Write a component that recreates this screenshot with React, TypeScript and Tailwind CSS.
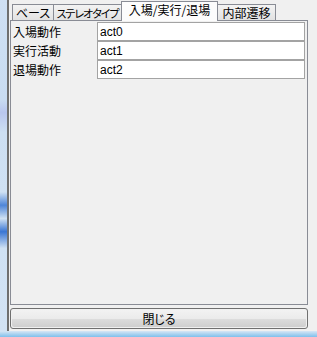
import React from "react";

const tabs = [
  { label: "ベース", w: "w-[42px]", fit: "", active: false },
  { label: "ステレオタイプ", w: "w-[69px]", fit: "text-[11px] tracking-[-1px]", active: false },
  { label: "入場/実行/退場", w: "w-[97px]", fit: "", active: true },
  { label: "内部遷移", w: "w-[59px]", fit: "", active: false },
];

const rows = [
  { label: "入場動作", value: "act0" },
  { label: "実行活動", value: "act1" },
  { label: "退場動作", value: "act2" },
];

export default function App() {
  return (
    <div className="w-[317px] h-[337px] bg-[#f0f0f0] flex flex-col overflow-hidden text-[12px] leading-none text-black font-['Noto_Sans_CJK_JP','Noto_Sans',sans-serif] [font-feature-settings:'palt']">
      <div className="flex flex-1 min-h-0">
        {/* window frame, left */}
        <div className="w-[7px] bg-[linear-gradient(to_bottom,#cfe0f3_0%,#c9dcf1_30%,#b9c6ee_34%,#cddff2_40%,#cfe1f3_58%,#4f86d8_62%,#cfe1f3_66%,#3a76d4_70%,#cfe1f3_75%,#d3e3f4_100%)]" />
        <div className="w-[2px] bg-[#6f6f6f]" />

        <div className="flex-1 flex flex-col pl-[1px] pr-[9px]">
          {/* tab strip */}
          <div className="h-[20px] flex items-end pl-[2px] relative z-10">
            {tabs.map((t) =>
              t.active ? (
                <div
                  key={t.label}
                  className={`${t.w} shrink-0 h-[20px] -mb-px -mr-px bg-[#fcfcfc] border border-b-0 border-[#898c95] flex items-center justify-center pb-[3px] whitespace-nowrap`}
                >
                  {t.label}
                </div>
              ) : (
                <div
                  key={t.label}
                  className={`${t.w} ${t.fit} shrink-0 h-[16px] -mr-px overflow-hidden bg-[linear-gradient(to_bottom,#f3f3f3,#e2e2e2)] border border-b-0 border-[#898c95] flex items-center justify-center pt-[1px] whitespace-nowrap`}
                >
                  {t.label}
                </div>
              )
            )}
          </div>

          {/* tab page */}
          <div className="flex-1 border border-[#898c95] bg-[#f0f0f0] pt-[1px] pl-[1px] pr-[2px]">
            {rows.map((r) => (
              <div key={r.label} className="flex h-[19px] items-center">
                <div className="w-[85px] pl-[1px] whitespace-nowrap">{r.label}</div>
                <div className="flex-1 h-[19px] bg-white border border-[#a3a3a3] flex items-center pl-[2px] font-['Liberation_Sans',sans-serif] text-[12px]">
                  {r.value}
                </div>
              </div>
            ))}
          </div>

          {/* close button */}
          <div className="mt-[3px] mb-[2px] h-[21px] rounded-[3px] border border-[#707070] p-px">
            <div className="h-full rounded-[2px] bg-[linear-gradient(to_bottom,#f2f2f2_0%,#ebebeb_50%,#dddddd_51%,#cfcfcf_100%)] flex items-center justify-center">
              閉じる
            </div>
          </div>
        </div>
      </div>

      {/* window frame, bottom */}
      <div className="h-[6px] bg-[linear-gradient(to_bottom,#d7e6f5,#7fc0ec)]" />
    </div>
  );
}
